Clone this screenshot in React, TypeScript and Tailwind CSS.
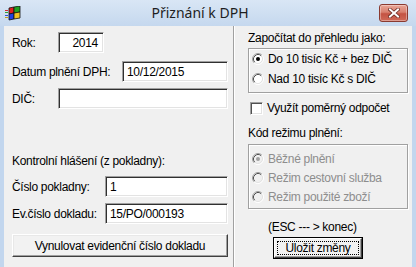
import React from "react";

const font = { fontFamily: '"Liberation Sans", Arial, sans-serif' };

function Radio({ checked, disabled }: { checked?: boolean; disabled?: boolean }) {
  return (
    <svg width="12" height="12" viewBox="0 0 12 12" className="shrink-0">
      <circle cx="6" cy="6" r="4.2" fill={disabled ? "#f0f0f0" : "#ffffff"} />
      <path d="M2.11 9.89 A5.5 5.5 0 0 1 9.89 2.11" fill="none" stroke="#a0a0a0" strokeWidth="1" />
      <path d="M9.89 2.11 A5.5 5.5 0 0 1 2.11 9.89" fill="none" stroke="#ffffff" strokeWidth="1" />
      <path d="M2.82 9.18 A4.5 4.5 0 0 1 9.18 2.82" fill="none" stroke="#505050" strokeWidth="1" />
      <path d="M9.18 2.82 A4.5 4.5 0 0 1 2.82 9.18" fill="none" stroke="#e3e3e3" strokeWidth="1" />
      {checked && <circle cx="6" cy="6" r="2" fill={disabled ? "#a0a0a0" : "#000000"} />}
    </svg>
  );
}

function Input({ value, className = "", right }: { value: string; className?: string; right?: boolean }) {
  return (
    <div
      className={`h-[21px] bg-white border border-t-[#a0a0a0] border-l-[#a0a0a0] border-r-white border-b-white shadow-[inset_1px_1px_0_#303030,inset_-1px_-1px_0_#e3e3e3] flex items-center text-black whitespace-nowrap ${
        right ? "justify-end pr-[5px]" : "pl-[4px]"
      } ${className}`}
    >
      {value}
    </div>
  );
}

function AppIcon() {
  return (
    <svg width="16" height="15" viewBox="0 0 16 15">
      <rect x="0" y="4" width="3" height="1" fill="#d03030" />
      <rect x="0" y="6" width="3" height="1" fill="#30a030" />
      <rect x="0" y="9" width="3" height="1" fill="#3050d0" />
      <rect x="0" y="11" width="3" height="1" fill="#c0a020" />
      <path d="M4 2 L9 1 L9 7 L4 8 Z" fill="#e02020" stroke="#111" strokeWidth="0.8" />
      <path d="M9 1 L15 0 L15 6 L9 7 Z" fill="#20a020" stroke="#111" strokeWidth="0.8" />
      <path d="M4 8 L9 7 L9 13 L4 14 Z" fill="#2040e0" stroke="#111" strokeWidth="0.8" />
      <path d="M9 7 L15 6 L15 12 L9 13 Z" fill="#f0c020" stroke="#111" strokeWidth="0.8" />
    </svg>
  );
}

function CloseButton() {
  return (
    <div className="w-[29px] h-[18px] rounded-[3px] border border-[#8a3a30] bg-[linear-gradient(to_bottom,#e9a697_0%,#d8806f_45%,#c45343_55%,#cf6a58_100%)] flex items-center justify-center shadow-[inset_0_0_0_1px_rgba(255,255,255,0.35)]">
      <svg width="12" height="10" viewBox="0 0 12 10">
        <path d="M2 1.5 L10 8.5 M10 1.5 L2 8.5" stroke="#6b2a22" strokeWidth="3.6" strokeLinecap="square" />
        <path d="M2 1.5 L10 8.5 M10 1.5 L2 8.5" stroke="#ffffff" strokeWidth="2" strokeLinecap="square" />
      </svg>
    </div>
  );
}

export default function App() {
  return (
    <div className="w-[416px] h-[267px] overflow-hidden flex flex-col text-black" style={font}>
      {/* title bar */}
      <div className="h-[26px] shrink-0 flex items-center pl-[5px] pr-[8px] bg-[linear-gradient(to_bottom,#d9e6f5,#c5d8ee)]">
        <div className="w-[16px] h-[15px] mt-[1px]">
          <AppIcon />
        </div>
        <div
          className="flex-1 text-center text-[14px] leading-[18px] text-[#1e1e1e]"
          style={{ fontFamily: '"Noto Sans", "Open Sans", sans-serif' }}
        >
          Přiznání k DPH
        </div>
        <div className="-mt-[1px]">
          <CloseButton />
        </div>
      </div>

      {/* body */}
      <div className="flex-1 flex bg-[#f0f0f0] border-l-4 border-r-4 border-[#c2d6ee] text-[12px] leading-[16px] tracking-[-0.3px] whitespace-nowrap">
        {/* left column */}
        <div className="w-[229px] shrink-0 pl-[8px] pr-[5px] flex flex-col">
          <div className="mt-[6px] flex items-center">
            <span className="w-[46px]">Rok:</span>
            <Input value="2014" right className="w-[46px]" />
          </div>
          <div className="mt-[8px] flex items-center">
            <span className="w-[110px]">Datum plnění DPH:</span>
            <Input value="10/12/2015" className="flex-1" />
          </div>
          <div className="mt-[6px] flex items-center">
            <span className="w-[46px]">DIČ:</span>
            <Input value="" className="flex-1" />
          </div>
          <div className="mt-[44px]">Kontrolní hlášení (z pokladny):</div>
          <div className="mt-[7px] flex items-center">
            <span className="w-[93px]">Číslo pokladny:</span>
            <Input value="1" className="flex-1" />
          </div>
          <div className="mt-[6px] flex items-center">
            <span className="w-[93px]">Ev.číslo dokladu:</span>
            <Input value="15/PO/000193" className="flex-1" />
          </div>
          <div className="mt-[10px] h-[23px] flex items-center justify-center bg-[#f2f2f2] border border-t-white border-l-white border-r-[#404040] border-b-[#404040] shadow-[inset_-1px_-1px_0_#a0a0a0,inset_1px_1px_0_#e8e8e8]">
            Vynulovat evidenční číslo dokladu
          </div>
        </div>

        {/* separator */}
        <div className="w-[2px] shrink-0 border-l border-l-[#a0a0a0] border-r border-r-white" />

        {/* right column */}
        <div className="flex-1 pl-[13px] pr-[4px] flex flex-col">
          <div className="mt-[4px]">Započítat do přehledu jako:</div>
          <div className="mt-[2px] h-[45px] border border-[#a0a0a0] shadow-[inset_1px_1px_0_#fff,1px_1px_0_#fff] pl-[3px] pb-[3px] flex flex-col">
            <div className="h-[20px] flex items-center gap-[4px]">
              <Radio checked />
              <span>Do 10 tisíc Kč + bez DIČ</span>
            </div>
            <div className="h-[20px] flex items-center gap-[4px]">
              <Radio />
              <span>Nad 10 tisíc Kč s DIČ</span>
            </div>
          </div>
          <div className="mt-[7px] h-[16px] flex items-center gap-[4px] pl-[2px]">
            <div className="w-[13px] h-[13px] shrink-0 bg-white border border-t-[#a0a0a0] border-l-[#a0a0a0] border-r-white border-b-white shadow-[inset_1px_1px_0_#505050,inset_-1px_-1px_0_#e3e3e3]" />
            <span>Využít poměrný odpočet</span>
          </div>
          <div className="mt-[9px]">Kód režimu plnění:</div>
          <div className="mt-[3px] h-[65px] border border-[#a0a0a0] shadow-[inset_1px_1px_0_#fff,1px_1px_0_#fff] pl-[3px] pt-[4px] flex flex-col text-[#8d8d8d]">
            <div className="h-[19px] flex items-center gap-[4px]">
              <Radio checked disabled />
              <span>Běžné plnění</span>
            </div>
            <div className="h-[19px] flex items-center gap-[4px]">
              <Radio disabled />
              <span>Režim cestovní služba</span>
            </div>
            <div className="h-[19px] flex items-center gap-[4px]">
              <Radio disabled />
              <span>Režim použité zboží</span>
            </div>
          </div>
          <div className="mt-[10px] ml-[20px]">(ESC --- &gt; konec)</div>
          <div className="mt-[2px] ml-[25px] w-[90px] h-[22px] border border-black bg-[#f2f2f2]">
            <div className="w-full h-full border border-t-white border-l-white border-r-[#404040] border-b-[#404040] shadow-[inset_-1px_-1px_0_#a0a0a0] p-[2px]">
              <div className="w-full h-full border border-dotted border-black flex items-center justify-center">
                Uložit změny
              </div>
            </div>
          </div>
        </div>
      </div>
    </div>
  );
}
